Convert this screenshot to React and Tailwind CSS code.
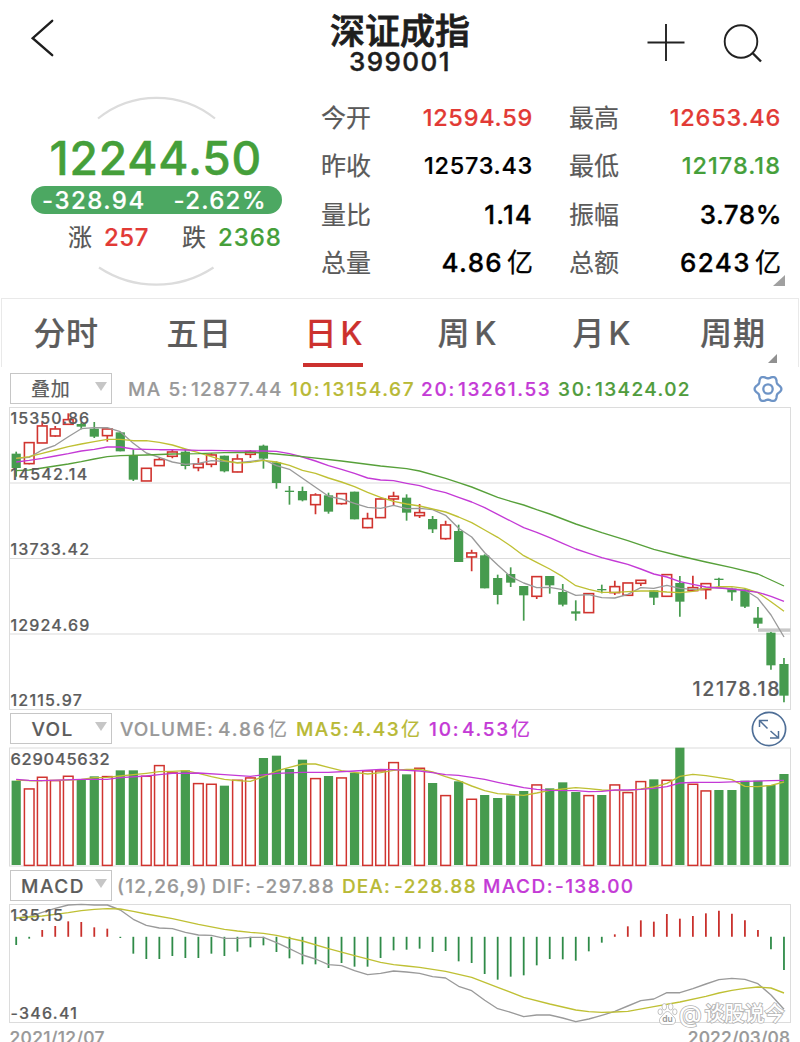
import React from "react";

const GREEN = "#469b4e";
const RED = "#d0342f";
const cx = (i) => 16.2 + i * 13.013;

/* [rising, high, body top, body bottom, low], in thirds of a pixel below the chart origin */
const CANDLES = [
  [0, 155, 161, 204, 230], [1, 127, 127, 190, 193], [1, 65, 77, 128, 128], [1, 78, 86, 107, 110],
  [1, 40, 58, 72, 72], [0, 68, 72, 80, 88], [0, 66, 86, 110, 114], [1, 86, 86, 106, 125],
  [0, 97, 97, 154, 154], [0, 148, 165, 239, 243], [1, 204, 204, 242, 242], [1, 172, 178, 196, 198],
  [1, 150, 155, 168, 175], [0, 148, 155, 198, 208], [1, 174, 191, 202, 214], [1, 160, 164, 192, 202],
  [0, 167, 167, 214, 217], [1, 163, 176, 215, 217], [1, 150, 154, 162, 174], [0, 134, 137, 176, 206],
  [0, 184, 187, 249, 266], [0, 258, 272, 276, 314], [0, 260, 273, 301, 304], [1, 280, 284, 313, 343],
  [0, 278, 286, 335, 341], [1, 280, 280, 310, 314], [0, 275, 275, 358, 358], [1, 338, 355, 382, 385],
  [1, 296, 296, 352, 352], [1, 275, 288, 296, 316], [0, 283, 293, 338, 362], [1, 312, 337, 346, 354],
  [0, 348, 357, 388, 399], [1, 362, 374, 415, 419], [0, 374, 393, 486, 486], [1, 449, 458, 470, 514],
  [0, 463, 466, 565, 565], [0, 524, 534, 585, 613], [0, 502, 522, 548, 561], [0, 558, 558, 586, 662],
  [1, 528, 529, 588, 597], [0, 528, 528, 556, 581], [0, 552, 576, 614, 619], [0, 601, 634, 641, 662],
  [1, 580, 580, 637, 637], [0, 554, 567, 571, 580], [1, 542, 559, 577, 585], [1, 548, 548, 585, 587],
  [1, 540, 540, 549, 558], [0, 571, 571, 593, 615], [1, 523, 523, 588, 588], [0, 528, 549, 605, 650],
  [1, 527, 562, 571, 573], [1, 550, 550, 568, 598], [0, 533, 536, 540, 560], [0, 563, 566, 577, 602],
  [0, 565, 568, 620, 624], [0, 621, 653, 671, 684], [0, 695, 698, 796, 809], [0, 774, 792, 887, 907],
];
const seq = (a) => a.map((y, i) => [i, y]);
const MA5 = seq([175, 172, 150, 136, 110, 86, 83, 83, 95, 130, 159, 172, 186, 193, 190, 182, 184, 188, 184, 179, 197, 208, 235, 262, 289, 297, 310, 322, 325, 316, 326, 325, 329, 346, 385, 411, 458, 495, 530, 549, 563, 562, 569, 586, 584, 593, 594, 583, 563, 565, 556, 565, 568, 565, 563, 567, 570, 595, 645, 711]);
const MA10 = seq([175, 170, 160, 150, 140, 132, 125, 118, 118, 122, 122, 127, 135, 147, 158, 170, 182, 189, 187, 181, 186, 196, 211, 220, 234, 246, 260, 277, 292, 304, 312, 318, 327, 336, 351, 368, 390, 412, 438, 467, 487, 507, 530, 557, 568, 577, 577, 575, 573, 573, 576, 578, 574, 565, 560, 560, 565, 578, 605, 634]);
const MA20 = seq([186, 181, 175, 168, 161, 153, 148, 141, 141, 147, 148, 149, 149, 150, 151, 151, 152, 153, 153, 153, 154, 161, 171, 183, 197, 208, 220, 234, 240, 242, 250, 257, 269, 278, 292, 306, 323, 343, 363, 383, 397, 413, 430, 447, 460, 473, 483, 493, 507, 522, 531, 545, 553, 561, 564, 567, 572, 577, 589, 604]);
const MA30 = [[0, 212], [1, 210], [2, 204], [3, 198], [4, 192], [5, 185], [6, 177], [7, 170], [8, 167], [10, 165], [12, 162], [14, 161], [16, 158], [18, 157], [19, 159], [20, 162], [22, 170], [25, 183], [28, 198], [30, 206], [31, 213], [33, 235], [34, 248], [35, 261], [37, 292], [38, 304], [39, 315], [40, 329], [41, 342], [43, 372], [45, 398], [47, 422], [49, 448], [51, 468], [53, 486], [55, 503], [57, 522], [58, 540], [59, 558]];

/* [rising, bar top] */
const VOLUME = [
  [0, 212], [1, 235], [1, 200], [1, 210], [1, 197], [0, 208], [0, 199], [1, 198], [0, 181], [0, 181],
  [1, 197], [1, 165], [1, 187], [0, 181], [1, 219], [1, 221], [0, 227], [1, 209], [1, 202], [0, 144],
  [0, 137], [0, 177], [0, 149], [1, 204], [0, 198], [1, 202], [0, 188], [1, 181], [1, 181], [1, 156],
  [0, 193], [1, 173], [0, 219], [1, 255], [0, 214], [1, 266], [0, 255], [0, 264], [0, 256], [0, 243],
  [1, 223], [0, 235], [0, 217], [0, 246], [1, 255], [0, 255], [1, 223], [1, 246], [1, 213], [0, 208],
  [1, 209], [0, 113], [1, 221], [1, 241], [0, 240], [0, 240], [0, 212], [0, 212], [0, 225], [0, 192],
];
const VMA5 = seq([210, 212, 212, 211, 210, 208, 203, 202, 198, 194, 190, 185, 184, 182, 190, 200, 208, 212, 214, 200, 183, 172, 162, 162, 172, 182, 187, 192, 188, 181, 178, 178, 186, 200, 212, 228, 242, 251, 253, 256, 249, 241, 237, 233, 236, 240, 241, 242, 237, 231, 220, 199, 193, 197, 203, 209, 229, 230, 226, 216]);
const VMA10 = [[0, 208], [1, 211], [2, 212], [5, 208], [7, 208], [8, 203], [10, 198], [11, 194], [12, 190], [14, 189], [16, 194], [18, 199], [20, 190], [22, 187], [24, 187], [26, 183], [28, 178], [29, 179], [30, 181], [31, 183], [32, 188], [33, 194], [34, 196], [35, 202], [36, 208], [37, 217], [38, 225], [39, 233], [40, 238], [41, 241], [43, 242], [44, 245], [45, 244], [46, 240], [47, 240], [48, 238], [49, 235], [50, 230], [51, 219], [52, 217], [54, 217], [56, 214], [58, 212], [59, 211]];

const MACD = [231, 212, 186, 174, 160, 162, 178, 182, 210, 257, 273, 273, 264, 270, 270, 257, 264, 251, 238, 232, 252, 271, 289, 289, 300, 285, 296, 296, 270, 247, 245, 242, 252, 249, 280, 285, 318, 335, 326, 322, 292, 273, 274, 278, 250, 224, 199, 175, 157, 161, 138, 152, 144, 136, 128, 137, 157, 186, 244, 306];
const DIF = seq([150, 146, 133, 121, 111, 109, 111, 111, 126, 154, 172, 180, 182, 193, 201, 202, 211, 211, 208, 208, 224, 242, 261, 273, 290, 293, 308, 320, 316, 309, 312, 316, 326, 330, 355, 368, 397, 422, 433, 446, 441, 441, 450, 461, 453, 442, 430, 414, 398, 393, 374, 374, 362, 348, 335, 331, 334, 347, 381, 424]);
const DEA = [[0, 150], [1, 147], [2, 144], [3, 139], [4, 134], [5, 128], [6, 124], [7, 122], [8, 123], [9, 130], [10, 138], [12, 152], [14, 169], [16, 184], [17, 189], [18, 193], [19, 196], [20, 202], [22, 219], [24, 242], [26, 263], [28, 283], [29, 290], [30, 294], [31, 298], [33, 310], [35, 328], [37, 358], [39, 388], [41, 408], [43, 426], [44, 431], [45, 433], [46, 432], [47, 430], [49, 416], [51, 402], [53, 385], [54, 375], [55, 367], [56, 361], [57, 357], [58, 360], [59, 375]];

function Line({ data, origin, color }) {
  return (
    <polyline
      points={data.map(([i, y]) => `${cx(i).toFixed(1)},${(origin + y / 3).toFixed(1)}`).join(" ")}
      fill="none" stroke={color} strokeWidth="1.35" strokeLinejoin="round"
    />
  );
}

const GRAY = "#9a9a9a";
const YELLOW = "#bfc034";
const PURPLE = "#c43ad6";
const LEAF = "#57a03a";

function PriceChart() {
  return (
    <div className="relative h-[309px]">
      <svg className="block" width="800" height="309" viewBox="0 404 800 309">
        <g fill="none" stroke="#dcdcdc" strokeWidth="1">
          <rect x="9.5" y="407.5" width="781" height="302" />
          <path d="M10 483H790M10 558.5H790M10 634H790" strokeWidth="1.2" />
        </g>
        {CANDLES.map(([up, h, t, b, l], i) => {
          const y = (v) => 400 + v / 3;
          const x = cx(i);
          return up ? (
            <g key={i} stroke={RED} fill="none">
              <path d={`M${x} ${y(h)}V${y(t)}M${x} ${y(b)}V${y(l)}`} strokeWidth="1.7" />
              <rect x={x - 4.8} y={y(t) + 0.3} width="9.6" height={(b - t) / 3} strokeWidth="1.6" />
            </g>
          ) : (
            <g key={i} fill={GREEN}>
              <path d={`M${x} ${y(h)}V${y(l)}`} stroke={GREEN} strokeWidth="1.7" />
              <rect x={x - 4.6} y={y(t)} width="9.2" height={(b - t) / 3} />
            </g>
          );
        })}
        <rect x="758" y="628.4" width="32.5" height="3.4" fill="#c8c8c8" />
        <Line data={MA5} origin={400} color={GRAY} />
        <Line data={MA10} origin={400} color={YELLOW} />
        <Line data={MA20} origin={400} color={PURPLE} />
        <Line data={MA30} origin={400} color={LEAF} />
      </svg>
      <div className="absolute left-[10.500px] top-[4px] text-[16px] leading-[20px] text-[#5c5c5c]">
        <div className="mb-[36px] h-5 tracking-[1.100px]">15350.86</div>
        <div className="mb-[55px] h-5 tracking-[1.250px]">14542.14</div>
        <div className="mb-[56px] h-5 tracking-[1.150px]">13733.42</div>
        <div className="mb-[55px] h-5 tracking-[1.150px]">12924.69</div>
        <div className="h-5 tracking-[1.200px]">12115.97</div>
      </div>
      <div className="absolute left-[692.500px] top-[273px] text-[19.500px] leading-6 tracking-[1.650px] text-[#5c5c5c]">12178.18</div>
    </div>
  );
}

function VolumeChart() {
  return (
    <div className="relative h-[126px]">
      <svg className="block" width="800" height="126" viewBox="0 744 800 126">
        <rect x="9.5" y="748" width="781" height="118" fill="none" stroke="#dcdcdc" />
        {VOLUME.map(([up, v], i) => {
          const y = 710 + v / 3;
          const x = cx(i);
          return up ? (
            <rect key={i} x={x - 4.8} y={y + 0.6} width="9.6" height={864.8 - y} fill="none" stroke={RED} strokeWidth="1.5" />
          ) : (
            <rect key={i} x={x - 4.6} y={y} width="9.2" height={865 - y} fill={GREEN} />
          );
        })}
        <Line data={VMA5} origin={710} color={YELLOW} />
        <Line data={VMA10} origin={710} color={PURPLE} />
      </svg>
      <div className="absolute left-[10.500px] top-[5px] text-[16.5px] leading-5 tracking-[0.700px] text-[#5c5c5c]">629045632</div>
    </div>
  );
}

function Watermark() {
  return (
    <div className="absolute left-[657px] top-[101px] flex items-center">
      <svg width="21" height="24" viewBox="0 0 21 24" fill="#fff" stroke="#b4b4b4" strokeWidth="0.8">
        <ellipse cx="7.3" cy="4.8" rx="2.3" ry="3.2" />
        <ellipse cx="13.7" cy="4.8" rx="2.3" ry="3.2" />
        <ellipse cx="3.2" cy="9.8" rx="2.2" ry="2.9" />
        <ellipse cx="17.8" cy="9.8" rx="2.2" ry="2.9" />
        <path d="M10.5 9.5c2.5 0 3.6 2.4 5 4 2 2 3.400 3.400 3 5.800-.5 3-3 3.200-4.500 3.200h-7C5 22.500 3 22 2.500 19.300 2 16.900 3.500 15.500 5.500 13.500c1.400-1.600 2.500-4 5-4z" />
        <text x="10.500" y="20" textAnchor="middle" fontFamily="Inter" fontSize="8.500" fontWeight="600" fill="#999" stroke="none">du</text>
      </svg>
      <span className="ml-[1px] flex whitespace-nowrap text-[20px] font-medium leading-6 text-white [-webkit-text-stroke:1.700px_#b4b4b4] [paint-order:stroke_fill]">
        <span className="w-[25.500px] text-[23px]">@</span>谈股说今
      </span>
    </div>
  );
}

function MacdChart() {
  return (
    <div className="relative h-[125px]">
      <svg className="block" width="800" height="125" viewBox="0 901 800 125">
        <rect x="9.5" y="904.5" width="781" height="118" fill="none" stroke="#dcdcdc" />
        {MACD.map((v, i) => (
          <path key={i} d={`M${cx(i)} 936.8V${868 + v / 3}`} stroke={v < 206 ? "#c9302c" : "#2f8b48"} strokeWidth="1.8" />
        ))}
        <Line data={DIF} origin={868} color={GRAY} />
        <Line data={DEA} origin={868} color={YELLOW} />
      </svg>
      <div className="absolute left-[10.500px] top-[4px] text-[16px] leading-5 tracking-[1.250px] text-[#5c5c5c]">
        <div className="mb-[78px]">135.15</div>
        <div>-346.41</div>
      </div>
      <Watermark />
    </div>
  );
}

function Picker({ children, className }) {
  return (
    <div className="ml-[10px] -mt-px flex h-[31px] w-[102px] shrink-0 items-center border border-[#c6c6c6] text-[19px] text-[#5c5c5c]">
      <span className={`flex-1 whitespace-nowrap pt-[2px] ${className}`}>{children}</span>
      <svg className="mr-1 mb-[3px]" width="12" height="9"><path d="M0 0H12L6 9z" fill="#c6c6c6" /></svg>
    </div>
  );
}

function GearIcon() {
  const pts = Array.from({ length: 73 }, (_, k) => {
    const a = (k * 5 * Math.PI) / 180;
    const r = 12 + 1.4 * Math.cos(6 * a);
    return `${(15 + r * Math.cos(a)).toFixed(2)} ${(15 + r * Math.sin(a)).toFixed(2)}`;
  });
  return (
    <svg width="30" height="30" fill="none" stroke="#6e94c6" strokeWidth="2.3">
      <path d={`M${pts.join("L")}z`} strokeLinejoin="round" />
      <circle cx="15" cy="15" r="4.7" />
    </svg>
  );
}

function Quote({ label, value, unit, valueClass }) {
  return (
    <>
      <span className="text-[25px] font-normal text-[#5a5a5a]">{label}</span>
      <span className={`flex items-center justify-end whitespace-nowrap ${valueClass}`}>
        <span>{value}</span>
        {unit && <span className="ml-[4px] text-[26px] font-normal tracking-normal">{unit}</span>}
      </span>
    </>
  );
}

export default function App() {
  return (
    <div className="flex h-[1042px] w-[800px] flex-col overflow-hidden bg-white font-['Inter','Noto_Sans_CJK_SC',sans-serif] font-medium text-black [-webkit-text-stroke:0.2px]">
      <header className="grid h-[84px] shrink-0 grid-cols-3 text-[#1e1e1e]">
        <div className="pl-[30px] pt-[18px]">
          <svg width="25" height="40" fill="none" stroke="#1e1e1e" strokeWidth="2.4" strokeLinecap="round">
            <path d="M22.200 2.800L2.700 20.200L22.200 37.200" strokeLinejoin="miter" />
          </svg>
        </div>
        <div className="flex flex-col items-center pt-[13px]">
          <h1 className="whitespace-nowrap text-[35px] font-medium leading-[37px] [-webkit-text-stroke:0.8px]">深证成指</h1>
          <div className="text-[26px] leading-[24px] tracking-[1.4px] [-webkit-text-stroke:0.400px]">399001</div>
        </div>
        <div className="flex justify-end gap-[38px] pr-[37px] pt-[23px]">
          <svg width="38" height="40" fill="none" stroke="#222" strokeWidth="1.9"><path d="M0.500 19.500H37.500M19 1V38" /></svg>
          <svg width="40" height="42" fill="none" stroke="#222" strokeWidth="1.9">
            <circle cx="18" cy="18.500" r="16.300" /><path d="M29.500 30L38 38.500" strokeWidth="2.4" />
          </svg>
        </div>
      </header>

      <section className="relative flex h-[214px] shrink-0">
        <div className="relative w-[321px]">
          <svg className="absolute left-0 top-0" width="321" height="214" viewBox="0 84 321 214" fill="none" stroke="#dcdcdc" strokeWidth="2.2">
            <path d="M98 118.500A93 93 0 0 1 215 118.500M99 267.500A104 104 0 0 0 213.500 267.500" />
          </svg>
          <div className="relative flex flex-col pt-[48px]">
            <div className="h-[52px] pl-[49.500px] text-[46px] leading-[52px] tracking-[0.900px] text-[#459f3a] [-webkit-text-stroke:0.500px]">12244.50</div>
            <div className="ml-[31px] mt-[2px] flex h-[28px] w-[251px] items-center rounded-full bg-[#4ca862] pl-[11px] pt-[2px] text-[24px] leading-[26px] text-white">
              <span className="w-[131.500px] tracking-[1.500px]">-328.94</span>
              <span className="tracking-[1.300px]">-2.62%</span>
            </div>
            <div className="mt-[10px] flex h-[28px] items-center pl-[68px] text-[24px] leading-[28px]">
              <span className="w-[36px] font-normal text-[#555]">涨</span>
              <span className="w-[78px] tracking-[0.500px] text-[#e23a35]">257</span>
              <span className="w-[36px] font-normal text-[#555]">跌</span>
              <span className="tracking-[0.900px] text-[#459f3a]">2368</span>
            </div>
          </div>
        </div>
        <div className="grid h-[203.500px] w-[460px] grid-cols-[50px_162px_36px_50px_162px] items-center pt-[9.500px] text-[23.500px] leading-[48.500px]">
          <Quote label="今开" value="12594.59" valueClass="tracking-[0.750px] text-[#e23a35]" />
          <i />
          <Quote label="最高" value="12653.46" valueClass="tracking-[0.750px] text-[#e23a35]" />
          <Quote label="昨收" value="12573.43" valueClass="tracking-[0.700px]" />
          <i />
          <Quote label="最低" value="12178.18" valueClass="tracking-[1.050px] text-[#459f3a]" />
          <Quote label="量比" value="1.14" valueClass="text-[26px] tracking-[1.100px] [-webkit-text-stroke:0.300px]" />
          <i />
          <Quote label="振幅" value="3.78%" valueClass="pl-[2px] -mr-px text-[26px] tracking-[0.500px] [-webkit-text-stroke:0.300px]" />
          <Quote label="总量" value="4.86" unit="亿" valueClass="text-[26px] tracking-[1.300px] [-webkit-text-stroke:0.300px]" />
          <i />
          <Quote label="总额" value="6243" unit="亿" valueClass="text-[26px] tracking-[1.400px] [-webkit-text-stroke:0.300px]" />
        </div>
        <svg className="absolute left-[773px] top-[191px]" width="12" height="11"><path d="M12 0V11H0z" fill="#a0a0a0" /></svg>
      </section>

      <nav className="relative mx-px flex h-[69px] shrink-0 border-x border-t border-[#e9e9e9] pl-[31.500px] text-[32px] font-medium leading-[69px] text-[#5c5c5c]">
        <span className="w-[133px] tracking-[0.500px]">分时</span>
        <span className="w-[138px] tracking-[0.500px]">五日</span>
        <span className="flex w-[133px] gap-[4px] text-[#cc312e]">
          日<span>K</span>
          <i className="absolute left-[301px] top-[64px] h-[4px] w-[60px] bg-[#cc312e]" />
        </span>
        <span className="flex w-[135px] gap-[5px]">周<span>K</span></span>
        <span className="flex w-[127.500px] gap-[4px]">月<span>K</span></span>
        <span className="tracking-[1px]">周期</span>
        <svg className="absolute left-[766px] top-[55px]" width="9" height="9"><path d="M9 0V9H0z" fill="#909090" /></svg>
      </nav>

      <div className="mt-[6px] flex h-[31px] shrink-0 items-center text-[19px] leading-[31px]">
        <Picker className="pl-[20px] font-normal tracking-[0.800px]">叠加</Picker>
        <div className="ml-[16px] mt-px flex w-[626px] whitespace-nowrap">
          <span className="w-[63px] tracking-[1.500px] text-[#999]">MA 5:</span>
          <span className="w-[99px] tracking-[1.220px] text-[#999]">12877.44</span>
          <span className="w-[33px] tracking-[1.800px] text-[#b8b936]">10:</span>
          <span className="w-[98px] tracking-[1.600px] text-[#b8b936]">13154.67</span>
          <span className="w-[37px] tracking-[1.800px] text-[#c43ad6]">20:</span>
          <span className="w-[100px] tracking-[1.600px] text-[#c43ad6]">13261.53</span>
          <span className="w-[37px] tracking-[1.800px] text-[#4f9c3c]">30:</span>
          <span className="tracking-[1.400px] text-[#4f9c3c]">13424.02</span>
        </div>
        <div className="-ml-px"><GearIcon /></div>
      </div>
      <PriceChart />

      <div className="flex h-[31px] shrink-0 items-center text-[19px] leading-[31px]">
        <Picker className="pl-[20.500px] tracking-[1.300px]">VOL</Picker>
        <div className="ml-[8px] mt-px flex w-[632px] whitespace-nowrap">
          <span className="w-[98px] tracking-[1px] text-[#999]">VOLUME:</span>
          <span className="w-[50px] tracking-[1.900px] text-[#999]">4.86</span>
          <span className="w-[28px] font-normal text-[#999]">亿</span>
          <span className="w-[56px] tracking-[1.450px] text-[#b8b936]">MA5:</span>
          <span className="w-[49px] tracking-[1.600px] text-[#b8b936]">4.43</span>
          <span className="w-[28px] font-normal text-[#b8b936]">亿</span>
          <span className="w-[33px] tracking-[1.800px] text-[#c43ad6]">10:</span>
          <span className="w-[49px] tracking-[1.700px] text-[#c43ad6]">4.53</span>
          <span className="font-normal text-[#c43ad6]">亿</span>
        </div>
        <svg className="-ml-px shrink-0" width="36" height="36" fill="none" stroke="#4f6f97" strokeWidth="1.700">
          <circle cx="18" cy="18" r="16.600" />
          <path d="M8.500 16V9.500H17M8.500 9.500L16.500 17.500M27.500 20V27H19M27.500 27L19.500 20" strokeWidth="1.500" />
        </svg>
      </div>
      <VolumeChart />

      <div className="flex h-[31px] shrink-0 items-center text-[19px] leading-[31px]">
        <Picker className="pl-[10px] tracking-[1.600px]">MACD</Picker>
        <div className="ml-[5px] mt-px flex whitespace-nowrap">
          <span className="w-[95px] tracking-[1.200px] text-[#999]">(12,26,9)</span>
          <span className="w-[44px] tracking-[1px] text-[#999]">DIF:</span>
          <span className="w-[86px] tracking-[1.400px] text-[#999]">-297.88</span>
          <span className="w-[52px] tracking-[1.100px] text-[#b8b936]">DEA:</span>
          <span className="w-[89px] tracking-[1.550px] text-[#b8b936]">-228.88</span>
          <span className="w-[72px] tracking-[1.500px] text-[#c43ad6]">MACD:</span>
          <span className="tracking-[1.350px] text-[#c43ad6]">-138.00</span>
        </div>
      </div>
      <MacdChart />
      <footer className="flex shrink-0 justify-between pl-[9.500px] pr-[10px] text-[17.500px] font-medium leading-[23px] text-[#999]">
        <span className="tracking-[0.330px]">2021/12/07</span>
        <span className="tracking-[0.100px]">2022/03/08</span>
      </footer>
    </div>
  );
}
